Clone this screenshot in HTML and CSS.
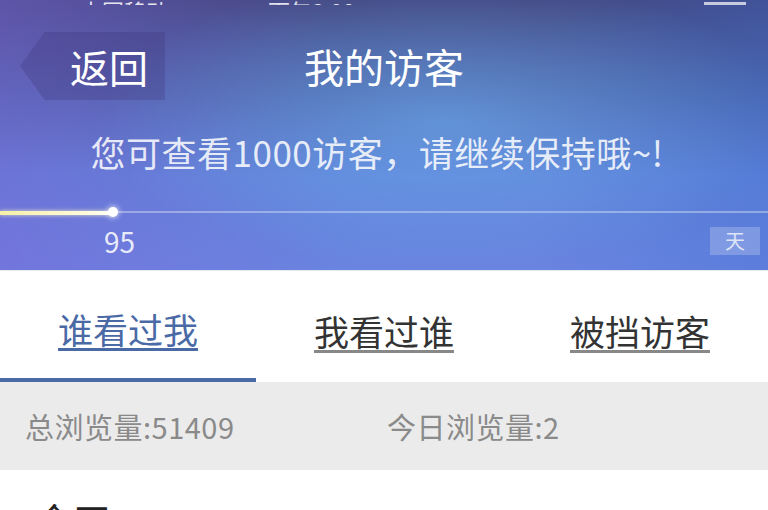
FILE: index.html
```html
<!DOCTYPE html>
<html lang="zh-CN">
<head>
    <meta charset="UTF-8">
    <meta name="viewport" content="width=device-width, initial-scale=1.0">
    <title>我的访客</title>
    <link rel="stylesheet" href="styles.css">
</head>
<body>
    <div class="header">
        <div class="status">
            <span class="carrier">中国移动</span>
            <span class="clock">下午3:08</span>
            <span class="battery"></span>
        </div>
        <div class="nav">
            <div class="back">返回</div>
            <div class="title">我的访客</div>
            <div></div>
        </div>
        <p class="notice">您可查看1000访客，请继续保持哦~!</p>
        <div class="progress">
            <div class="fill" style="width: 115px;"></div>
        </div>
        <div class="meta">
            <span class="days">95</span>
            <span class="unit">天</span>
        </div>
    </div>

    <div class="tabs">
        <div class="tab active"><span>谁看过我</span></div>
        <div class="tab"><span>我看过谁</span></div>
        <div class="tab"><span>被挡访客</span></div>
    </div>

    <div class="stats">
        <span>总浏览量:51409</span>
        <span>今日浏览量:2</span>
    </div>

    <div class="day-label">今天</div>
</body>
</html>
```

FILE: styles.css
```css
body {
    margin: 0;
    width: 768px;
    height: 510px;
    overflow: hidden;
    background: #fff;
    font-family: "Noto Sans CJK SC", "Noto Sans", sans-serif;
}
.header {
    height: 270px;
    color: #fff;
    background:
        radial-gradient(ellipse 45% 55% at 58% 45%, rgba(110, 175, 240, 0.55), rgba(110, 175, 240, 0) 100%),
        linear-gradient(to right, rgba(125, 100, 215, 0.45), rgba(125, 100, 215, 0) 45%, rgba(60, 110, 210, 0) 70%, rgba(60, 110, 210, 0.3)),
        linear-gradient(to bottom, #434780 0%, #4d64a8 35%, #5f82d8 65%, #6a84e0 100%);
    border-bottom: 1px solid #e6eaf5;
}
.status {
    height: 5px;
    overflow: hidden;
    display: flex;
    align-items: flex-end;
    font-size: 22px;
    line-height: 22px;
    color: rgba(255, 255, 255, 0.85);
}
.carrier {
    margin-left: 80px;
    margin-bottom: -16px;
}
.clock {
    margin-left: 100px;
    margin-bottom: -16px;
}
.battery {
    margin-left: auto;
    margin-right: 22px;
    width: 42px;
    height: 14px;
    background: rgba(255, 255, 255, 0.7);
    margin-bottom: -11px;
}
.nav {
    margin-top: 27px;
    height: 68px;
    display: grid;
    grid-template-columns: 1fr auto 1fr;
    align-items: center;
}
.back {
    margin-left: 20px;
    width: 145px;
    height: 68px;
    box-sizing: border-box;
    padding-left: 50px;
    line-height: 68px;
    font-size: 39px;
    background: rgba(60, 50, 120, 0.28);
    clip-path: polygon(17% 0, 100% 0, 100% 100%, 17% 100%, 0 50%);
}
.title {
    font-size: 40px;
    line-height: 68px;
}
.notice {
    margin: 32px 0 0 0;
    height: 40px;
    line-height: 40px;
    font-size: 35px;
    letter-spacing: 0.5px;
    text-align: center;
    padding-right: 14px;
    color: rgba(255, 255, 255, 0.85);
}
.progress {
    margin-top: 40px;
    height: 2px;
    background: rgba(255, 255, 255, 0.35);
    position: relative;
}
.fill {
    height: 4px;
    margin-top: -1px;
    background: linear-gradient(to right, #f6f0a8, #fffbe0 80%, #ffffff);
    box-shadow: 0 0 4px rgba(255, 250, 200, 0.8);
    border-radius: 0 4px 4px 0;
}
.fill::after {
    content: "";
    position: absolute;
    left: 108px;
    top: -4px;
    width: 10px;
    height: 10px;
    border-radius: 50%;
    background: #fff;
    box-shadow: 0 0 6px #fff;
}
.meta {
    margin-top: 14px;
    height: 28px;
    display: flex;
    justify-content: space-between;
    align-items: center;
}
.days {
    margin-left: 104px;
    font-size: 28px;
    color: rgba(255, 255, 255, 0.85);
}
.unit {
    margin-right: 8px;
    width: 50px;
    height: 28px;
    line-height: 28px;
    text-align: center;
    font-size: 20px;
    background: rgba(255, 255, 255, 0.22);
    color: rgba(255, 255, 255, 0.75);
}
.tabs {
    display: flex;
    height: 111px;
}
.tab {
    flex: 1;
    display: flex;
    align-items: center;
    justify-content: center;
    padding-top: 8px;
    box-sizing: border-box;
    font-size: 35px;
    color: #333;
}
.tab span {
    text-decoration: underline;
    text-decoration-color: #888;
    text-underline-offset: 4px;
}
.tab.active {
    color: #4a6aa6;
    border-bottom: 4px solid #4a6aa6;
}
.tab.active span {
    text-decoration-color: #4a6aa6;
}
.stats {
    height: 88px;
    background: #ebebeb;
    display: grid;
    grid-template-columns: 362px auto;
    align-items: center;
    padding-left: 25px;
    font-size: 29px;
    letter-spacing: 0.5px;
    color: #8a8a8a;
}
.day-label {
    margin-top: 22px;
    padding-left: 35px;
    font-size: 38px;
    color: #222;
}
```
